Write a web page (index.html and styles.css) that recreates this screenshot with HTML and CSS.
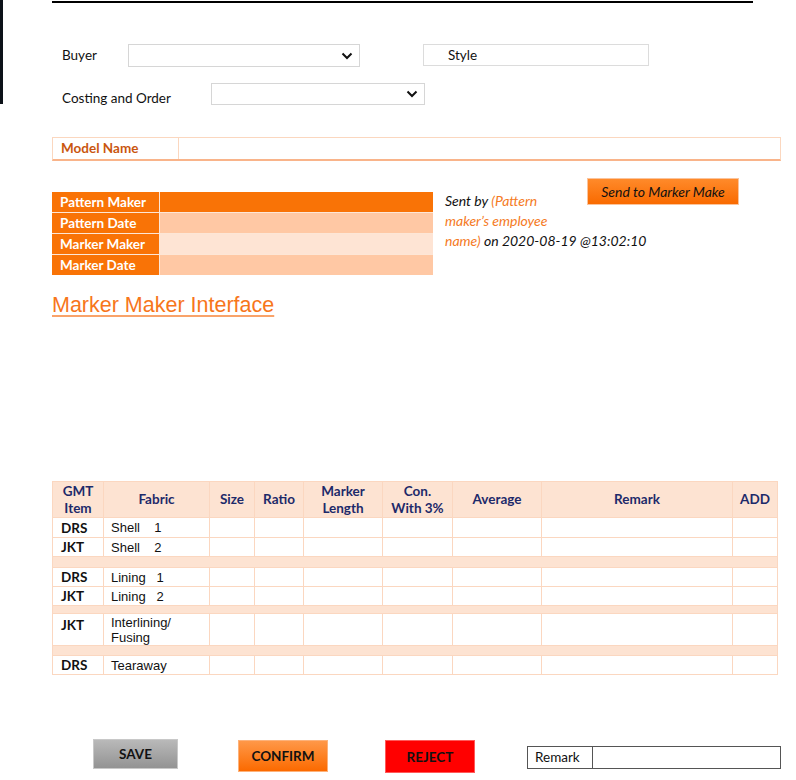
FILE: index.html
```html
<!DOCTYPE html>
<html>
<head>
<meta charset="utf-8">
<link rel="stylesheet" href="styles.css">
</head>
<body>
<div class="page">
  <div class="toprule"></div>

  <div class="form">
    <div class="form-row row-buyer">
      <span class="lbl lbl-buyer">Buyer</span>
      <div class="select sel-buyer"><svg class="chev" width="12" height="8" viewBox="0 0 12 8"><path d="M1.5 1.5 L6 6 L10.5 1.5" fill="none" stroke="#111" stroke-width="2"/></svg></div>
      <div class="stylebox">Style</div>
    </div>
    <div class="form-row row-costing">
      <span class="lbl lbl-costing">Costing and Order</span>
      <div class="select sel-costing"><svg class="chev" width="12" height="8" viewBox="0 0 12 8"><path d="M1.5 1.5 L6 6 L10.5 1.5" fill="none" stroke="#111" stroke-width="2"/></svg></div>
    </div>
  </div>

  <div class="model">
    <div class="model-lbl">Model Name</div>
    <div class="model-val"></div>
  </div>

  <div class="pattern">
    <div class="ptable">
      <div class="prow"><div class="plbl">Pattern Maker</div><div class="pval v1"></div></div>
      <div class="prow"><div class="plbl">Pattern Date</div><div class="pval v2"></div></div>
      <div class="prow"><div class="plbl">Marker Maker</div><div class="pval v3"></div></div>
      <div class="prow"><div class="plbl">Marker Date</div><div class="pval v2"></div></div>
    </div>
    <p class="sent">Sent by <span class="or">(Pattern</span><br><span class="or">maker’s employee</span><br><span class="or">name)</span> on 2020-08-19 @13:02:10</p>
    <button class="sendbtn">Send to Marker Make</button>
  </div>

  <h2 class="title">Marker Maker Interface</h2>

  <table class="grid">
    <colgroup>
      <col style="width:51px"><col style="width:106px"><col style="width:45px"><col style="width:49px"><col style="width:79px"><col style="width:70px"><col style="width:89px"><col style="width:191px"><col style="width:45px">
    </colgroup>
    <thead>
      <tr><th>GMT<br>Item</th><th>Fabric</th><th>Size</th><th>Ratio</th><th>Marker<br>Length</th><th>Con.<br>With 3%</th><th>Average</th><th>Remark</th><th>ADD</th></tr>
    </thead>
    <tbody>
      <tr class="r first"><td class="g">DRS</td><td class="f">Shell    1</td><td></td><td></td><td></td><td></td><td></td><td></td><td></td></tr>
      <tr class="r"><td class="g">JKT</td><td class="f">Shell    2</td><td></td><td></td><td></td><td></td><td></td><td></td><td></td></tr>
      <tr class="sp s1"><td colspan="9"></td></tr>
      <tr class="r"><td class="g">DRS</td><td class="f">Lining   1</td><td></td><td></td><td></td><td></td><td></td><td></td><td></td></tr>
      <tr class="r"><td class="g">JKT</td><td class="f">Lining   2</td><td></td><td></td><td></td><td></td><td></td><td></td><td></td></tr>
      <tr class="sp s2"><td colspan="9"></td></tr>
      <tr class="r tall"><td class="g">JKT</td><td class="f">Interlining/<br>Fusing</td><td></td><td></td><td></td><td></td><td></td><td></td><td></td></tr>
      <tr class="sp s3"><td colspan="9"></td></tr>
      <tr class="r"><td class="g">DRS</td><td class="f">Tearaway</td><td></td><td></td><td></td><td></td><td></td><td></td><td></td></tr>
    </tbody>
  </table>

  <div class="actions">
    <button class="btn save">SAVE</button>
    <button class="btn confirm">CONFIRM</button>
    <button class="btn reject">REJECT</button>
    <div class="remark"><span class="remark-lbl">Remark</span><span class="remark-val"></span></div>
  </div>
</div>
</body>
</html>
```

FILE: styles.css
```css
html, body {
  margin: 0;
  padding: 0;
}
body {
  width: 796px;
  height: 780px;
  overflow: hidden;
  background: #fff linear-gradient(#0c1118, #0c1118) no-repeat 0 0 / 3px 104px;
  font-family: Lato, "Open Sans", sans-serif;
  color: #111;
}
.page {
  padding-left: 52px;
  padding-top: 1px;
}
.toprule {
  width: 701px;
  height: 2px;
  background: #000;
}
.form {
  padding-left: 10px;
  margin-top: 41px;
}
.form-row {
  display: flex;
  align-items: center;
}
.lbl {
  font-size: 13.5px;
  color: #111;
}
.lbl-buyer { width: 66px; padding-bottom: 1px; }
.lbl-costing { width: 149px; padding-top: 8px; }
.row-costing { margin-top: 15px; }
.select {
  box-sizing: border-box;
  height: 23px;
  border: 1px solid #d6d6d6;
  background: #fff;
  display: flex;
  align-items: center;
  justify-content: flex-end;
  padding-right: 6px;
}
.sel-buyer { width: 232px; }
.sel-costing { width: 214px; height: 22px; }
.stylebox {
  box-sizing: border-box;
  width: 226px;
  height: 22px;
  margin-left: 63px;
  margin-top: -2px;
  border: 1px solid #dcdcdc;
  font-size: 13.5px;
  padding-left: 24px;
  line-height: 20px;
}
.model {
  display: flex;
  width: 729px;
  height: 24px;
  box-sizing: border-box;
  margin-top: 31px;
  border: 1px solid #fbd7bf;
  border-bottom: 2px solid #f9b48a;
}
.model-lbl {
  width: 126px;
  border-right: 1px solid #fbd7bf;
  font-size: 13.5px;
  font-weight: bold;
  color: #c9560f;
  padding-left: 8px;
  line-height: 20px;
  box-sizing: border-box;
}
.pattern {
  display: flex;
  align-items: flex-start;
  margin-top: 17px;
}
.ptable {
  margin-top: 14px;
  width: 381px;
  background: #fde6d6;
  padding: 0;
}
.prow {
  display: flex;
  height: 20px;
  border-bottom: 1px solid #fde6d6;
}
.prow:last-child { border-bottom: 0; }
.plbl {
  width: 108px;
  background: #f97306;
  color: #fff;
  font-weight: bold;
  font-size: 13.5px;
  line-height: 20px;
  padding-left: 8px;
  box-sizing: border-box;
  border-right: 1px solid #fde6d6;
}
.pval { flex: 1; }
.v1 { background: #f97306; }
.v2 { background: #ffc8a4; }
.v3 { background: #fee4d4; }
.sent {
  margin: 13px 0 0 12px;
  font-style: italic;
  font-size: 14px;
  line-height: 20px;
  width: 142px;
  white-space: nowrap;
}
.or { color: #f57a24; }
.sendbtn {
  margin-left: 0;
  width: 152px;
  height: 27px;
  border: 1px solid #fbc39b;
  background: linear-gradient(#ff8a2a, #f96a00);
  font-family: Lato, "Open Sans", sans-serif;
  font-style: italic;
  font-size: 14px;
  color: #111;
  padding: 0;
}
.title {
  margin: 18px 0 0 0;
  font-family: "Liberation Sans", Arial, sans-serif;
  font-weight: normal;
  font-size: 21.5px;
  color: #f7761b;
  text-decoration: underline;
  text-decoration-color: #f9a36a;
  text-underline-offset: 3px;
  line-height: 24px;
}
.grid {
  margin-top: 164px;
  border-collapse: collapse;
  table-layout: fixed;
  width: 725px;
}
.grid th, .grid td {
  border: 1px solid #fbd7c0;
  padding: 0;
}
.grid th {
  background: #fde3d2;
  color: #1d2a6a;
  font-size: 13.5px;
  font-weight: bold;
  height: 35px;
  line-height: 17px;
  text-align: center;
}
.grid .r td { height: 18px; }
.grid .r.first td { height: 19px; }
.grid .r.tall td { height: 29px; vertical-align: top; }
.grid .g {
  font-weight: bold;
  font-size: 13.5px;
  padding-left: 8px;
  line-height: 18px;
}
.grid .tall .g { padding-top: 2px; }
.grid .f {
  font-family: "Liberation Sans", Arial, sans-serif;
  font-size: 13px;
  padding-left: 7px;
  white-space: pre;
  line-height: 15px;
}
.grid .tall .f { padding-top: 1px; }
.grid .sp td { background: #fde3d2; }
.grid .s1 td { height: 10px; }
.grid .s2 td { height: 7px; }
.grid .s3 td { height: 9px; }
.actions {
  display: flex;
  align-items: flex-start;
  margin-top: 64px;
}
.btn {
  font-family: Lato, "Open Sans", sans-serif;
  font-weight: bold;
  font-size: 13.5px;
  color: #111;
  padding: 0;
  border: 1px solid transparent;
}
.save {
  margin-left: 41px;
  width: 85px;
  height: 30px;
  background: linear-gradient(#b9b9b9, #939393);
  border-color: #c8c8c8;
}
.confirm {
  margin-left: 60px;
  margin-top: 1px;
  width: 90px;
  height: 32px;
  background: linear-gradient(#ff9848, #fb6a00);
  border-color: #fdb27a;
}
.reject {
  margin-left: 57px;
  margin-top: 1px;
  width: 90px;
  height: 33px;
  background: #ff0000;
  border-color: #ff5a5a;
}
.remark {
  display: flex;
  margin-left: 52px;
  margin-top: 7px;
  width: 254px;
  height: 23px;
  box-sizing: border-box;
  border: 1px solid #555;
  font-size: 13.5px;
}
.remark-lbl {
  width: 65px;
  border-right: 1px solid #555;
  padding-left: 7px;
  box-sizing: border-box;
  line-height: 21px;
}
.remark-val { flex: 1; }
```
